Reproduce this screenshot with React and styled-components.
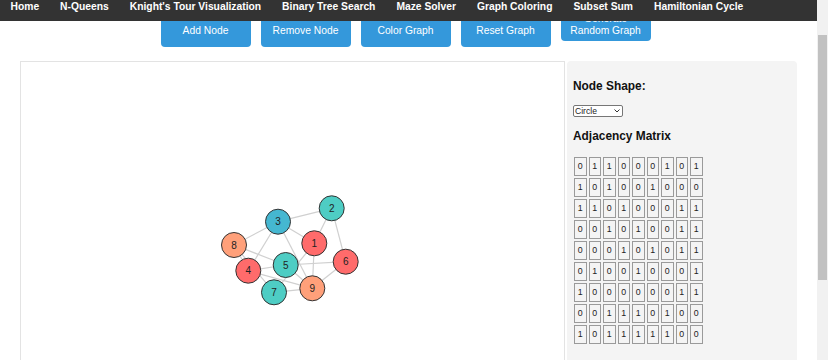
import React, { useLayoutEffect, useRef, useState } from 'react';
import styled, { createGlobalStyle } from 'styled-components';

const GlobalStyle = createGlobalStyle`
  html, body { margin: 0; padding: 0; height: 100%; overflow: hidden; }
  body { font-family: "Liberation Sans", Arial, sans-serif; background: #fff; color: #111; }
`;

const Window = styled.div`
  display: flex;
  height: 100vh;
`;

const Viewport = styled.div`
  flex: 1;
  min-width: 0;
  height: 100%;
  overflow: hidden;
`;

const ScrollTrack = styled.div`
  width: 11px;
  flex: none;
  display: flex;
  flex-direction: column;
  background: #f1f1f1;
`;

const ScrollThumb = styled.div`
  margin: 0 1px;
  background: #c1c1c1;
  flex: none;
`;

const Nav = styled.nav`
  position: sticky;
  top: 0;
  z-index: 10;
  height: 21px;
  box-sizing: border-box;
  padding-top: 1px;
  background: #333;
  display: flex;
`;

const NavLink = styled.a`
  color: #fff;
  font-weight: bold;
  font-size: 10.3px;
  line-height: 12px;
  padding: 0 10.5px;
  text-decoration: none;
  white-space: nowrap;
`;

const Controls = styled.div`
  display: flex;
  justify-content: center;
  align-items: last baseline;
  gap: 10px;
  padding: 39px 6px 0 0;
`;

const Button = styled.button`
  width: 90px;
  height: 32px;
  padding: 0 9px;
  border: none;
  border-radius: 4px;
  background: #3498db;
  color: #fff;
  font: 10.3px/12px "Liberation Sans", Arial, sans-serif;
  cursor: pointer;
`;

const Main = styled.main`
  display: flex;
  gap: 2px;
  padding: 14px 20px 17px;
`;

const CanvasBox = styled.div`
  flex: 1;
  height: 400px;
  box-sizing: border-box;
  border: 1px solid #e3e3e3;
  background: #fff;
`;

const GraphSvg = styled.svg`
  display: block;
  width: 100%;
  height: 100%;
`;

const Panel = styled.aside`
  width: 230px;
  box-sizing: border-box;
  padding: 6px 6px;
  background: #f4f4f4;
  border-radius: 4px;
`;

const Heading = styled.h3`
  margin: 12.5px 0 12px;
  font-size: 11.9px;
  line-height: 13.6px;
  font-weight: bold;
  color: #111;
`;

const SelectWrap = styled.div`
  position: relative;
  display: flex;
  width: 50px;
  margin-top: 0.4px;
`;

const ShapeSelect = styled.select`
  appearance: none;
  width: 50px;
  height: 12px;
  box-sizing: border-box;
  padding: 0 0 0 1px;
  border: 1px solid #767676;
  border-radius: 2px;
  background: #fff;
  color: #222;
  font: 8.6px/10px "Liberation Sans", Arial, sans-serif;
`;

const Chevron = styled.svg`
  position: absolute;
  right: 3px;
  top: 4px;
  pointer-events: none;
`;

const Matrix = styled.table`
  border-collapse: separate;
  border-spacing: 2px;
  font-size: 8.8px;
  margin-left: -1px;
  margin-top: -0.4px;
`;

const Cell = styled.td`
  box-sizing: content-box;
  width: 10.5px;
  min-width: 10.5px;
  height: 17px;
  padding: 0;
  border: 1px solid #9a9a9a;
  text-align: center;
  color: #222;
  line-height: 10px;
`;

const navItems = ['Home', 'N-Queens', "Knight's Tour Visualization", 'Binary Tree Search', 'Maze Solver', 'Graph Coloring', 'Subset Sum', 'Hamiltonian Cycle'];
const buttons = ['Add Node', 'Remove Node', 'Color Graph', 'Reset Graph', 'Generate Random Graph'];

const RED = '#ff6b6b';
const TEAL = '#4ecdc4';
const BLUE = '#45b7d1';
const SALMON = '#ffa07a';

const nodes = [
  { id: 1, x: 293.3, y: 181.3, c: RED },
  { id: 2, x: 310.7, y: 146.3, c: TEAL },
  { id: 3, x: 257, y: 159.7, c: BLUE },
  { id: 4, x: 227.3, y: 208.7, c: RED },
  { id: 5, x: 264.7, y: 203, c: TEAL },
  { id: 6, x: 324.7, y: 199.7, c: RED },
  { id: 7, x: 253, y: 230.3, c: TEAL },
  { id: 8, x: 213, y: 183, c: SALMON },
  { id: 9, x: 291.3, y: 226.3, c: SALMON },
];

const matrix = [
  [0, 1, 1, 0, 0, 0, 1, 0, 1],
  [1, 0, 1, 0, 0, 1, 0, 0, 0],
  [1, 1, 0, 1, 0, 0, 0, 1, 1],
  [0, 0, 1, 0, 1, 0, 0, 1, 1],
  [0, 0, 0, 1, 0, 1, 0, 1, 1],
  [0, 1, 0, 0, 1, 0, 0, 0, 1],
  [1, 0, 0, 0, 0, 0, 0, 1, 1],
  [0, 0, 1, 1, 1, 0, 1, 0, 0],
  [1, 0, 1, 1, 1, 1, 1, 0, 0],
];

const edges = [];
matrix.forEach((row, i) => row.forEach((v, j) => { if (v && j > i) edges.push([i, j]); }));

export default function App() {
  const ref = useRef(null);
  const [thumb, setThumb] = useState({ top: 35, height: 245 });

  useLayoutEffect(() => {
    const el = ref.current;
    if (!el) return;
    el.scrollTop = 51;
    const ratio = el.clientHeight / el.scrollHeight;
    setThumb({ top: el.scrollTop * ratio, height: el.clientHeight * ratio });
  }, []);

  return (
    <>
      <GlobalStyle />
      <Window>
        <Viewport ref={ref}>
          <Nav>
            {navItems.map((n) => (
              <NavLink key={n} href="#">{n}</NavLink>
            ))}
          </Nav>
          <Controls>
            {buttons.map((b) => (
              <Button key={b}>{b}</Button>
            ))}
          </Controls>
          <Main>
            <CanvasBox>
              <GraphSvg>
                {edges.map(([a, b]) => (
                  <line
                    key={`${a}-${b}`}
                    x1={nodes[a].x}
                    y1={nodes[a].y}
                    x2={nodes[b].x}
                    y2={nodes[b].y}
                    stroke="#d0d0d0"
                    strokeWidth="1.2"
                  />
                ))}
                {nodes.map((n) => (
                  <g key={n.id}>
                    <circle cx={n.x} cy={n.y} r="12.5" fill={n.c} stroke="#333" strokeWidth="1" />
                    <text
                      x={n.x}
                      y={n.y + 3.6}
                      textAnchor="middle"
                      fontSize="10"
                      fontFamily='"Liberation Sans", Arial, sans-serif'
                      fill="#222"
                    >
                      {n.id}
                    </text>
                  </g>
                ))}
              </GraphSvg>
            </CanvasBox>
            <Panel>
              <Heading>Node Shape:</Heading>
              <SelectWrap>
                <ShapeSelect defaultValue="circle">
                  <option value="circle">Circle</option>
                  <option value="square">Square</option>
                </ShapeSelect>
                <Chevron width="6" height="4" viewBox="0 0 6 4">
                  <polyline points="0.5,0.5 3,3 5.5,0.5" fill="none" stroke="#333" strokeWidth="1" />
                </Chevron>
              </SelectWrap>
              <Heading>Adjacency Matrix</Heading>
              <Matrix>
                <tbody>
                  {matrix.map((row, i) => (
                    <tr key={i}>
                      {row.map((v, j) => (
                        <Cell key={j}>{v}</Cell>
                      ))}
                    </tr>
                  ))}
                </tbody>
              </Matrix>
            </Panel>
          </Main>
        </Viewport>
        <ScrollTrack aria-hidden="true">
          <ScrollThumb style={{ marginTop: thumb.top, height: thumb.height }} />
        </ScrollTrack>
      </Window>
    </>
  );
}
